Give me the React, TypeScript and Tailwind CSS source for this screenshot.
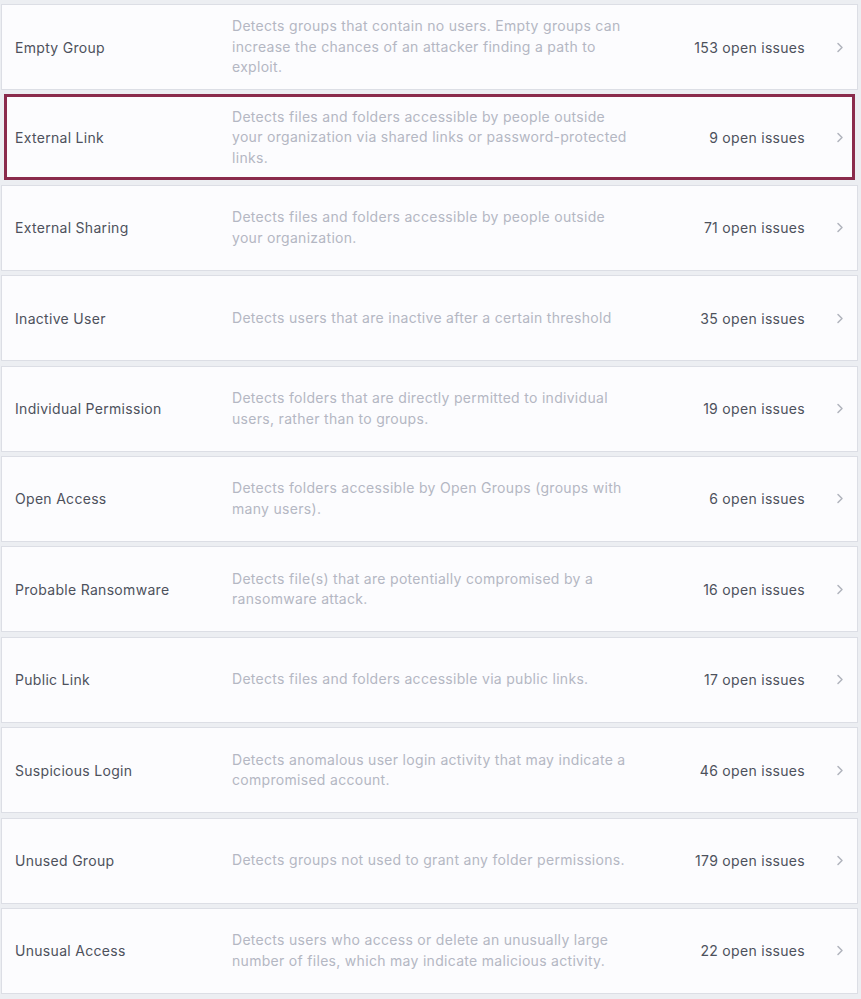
import React from "react";

const rows = [
  { t: "Empty Group", d: "Detects groups that contain no users. Empty groups can increase the chances of an attacker finding a path to exploit.", n: 153 },
  { t: "External Link", d: "Detects files and folders accessible by people outside your organization via shared links or password-protected links.", n: 9, sel: true },
  { t: "External Sharing", d: "Detects files and folders accessible by people outside your organization.", n: 71 },
  { t: "Inactive User", d: "Detects users that are inactive after a certain threshold", n: 35 },
  { t: "Individual Permission", d: "Detects folders that are directly permitted to individual users, rather than to groups.", n: 19 },
  { t: "Open Access", d: "Detects folders accessible by Open Groups (groups with many users).", n: 6 },
  { t: "Probable Ransomware", d: "Detects file(s) that are potentially compromised by a ransomware attack.", n: 16 },
  { t: "Public Link", d: "Detects files and folders accessible via public links.", n: 17 },
  { t: "Suspicious Login", d: "Detects anomalous user login activity that may indicate a compromised account.", n: 46 },
  { t: "Unused Group", d: "Detects groups not used to grant any folder permissions.", n: 179 },
  { t: "Unusual Access", d: "Detects users who access or delete an unusually large number of files, which may indicate malicious activity.", n: 22 },
];

export default function App() {
  return (
    <div
      className="min-h-[999px] w-[861px] bg-[#eceef2] pt-[4px] pl-[1px] pr-[3px] flex flex-col gap-[4.4px] tracking-[0.3px]"
      style={{ fontFamily: "Inter, 'Noto Sans', sans-serif" }}
    >
      {rows.map((r) => (
        <div
          key={r.t}
          className={
            r.sel
              ? "h-[86px] mx-[3px] border-[3px] border-[#8a2b4c] bg-[#fcfcfe] flex items-center"
              : "h-[86px] border border-[#dcdee5] bg-[#fcfcfe] flex items-center"
          }
        >
          <div className={r.sel ? "w-[225px] pl-[8px] shrink-0 text-[14px] text-[#4d515c]" : "w-[230px] pl-[13px] shrink-0 text-[14px] text-[#4d515c]"}>
            {r.t}
          </div>
          <div className="w-[400px] shrink-0 text-[14px] leading-[20.5px] text-[#b4b7c3]">{r.d}</div>
          <div className="flex-1 text-right text-[14px] text-[#4d515c]">{r.n} open issues</div>
          <div className={r.sel ? "w-[47px] shrink-0 flex pl-[31px]" : "w-[52px] shrink-0 flex pl-[31px]"}>
            <svg width="8" height="11" viewBox="0 0 8 11" fill="none">
              <path d="M2 1.5 L6 5.5 L2 9.5" stroke="#b0b3bc" strokeWidth="1.5" strokeLinecap="round" strokeLinejoin="round" />
            </svg>
          </div>
        </div>
      ))}
    </div>
  );
}
